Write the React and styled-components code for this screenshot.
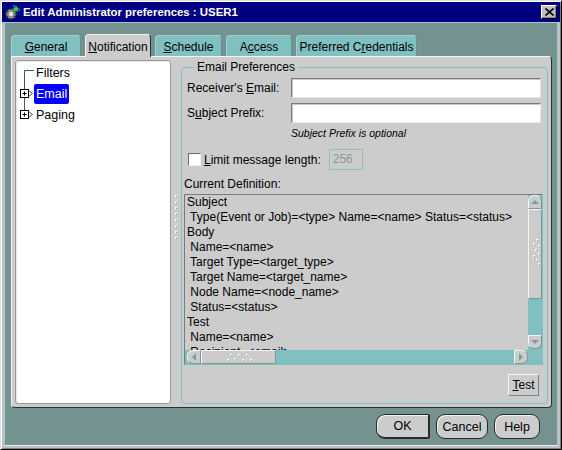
import styled, { createGlobalStyle } from 'styled-components';

const GlobalStyle = createGlobalStyle`
  html, body { margin: 0; padding: 0; background: #c0c0c0; }
  body {
    font-family: "Liberation Sans", Arial, sans-serif;
    font-size: 12px;
    color: #000;
  }
  u { text-decoration-thickness: 1px; text-underline-offset: 1px; }
`;

const Window = styled.div`
  width: 562px;
  height: 450px;
  box-sizing: border-box;
  display: flex;
  flex-direction: column;
  background: #c0c0c0;
  border-top: 1px solid #dfdfdf;
  border-left: 1px solid #dfdfdf;
  border-right: 1px solid #000;
  border-bottom: 1px solid #000;
  box-shadow: inset 1px 1px #fff, inset -1px -1px #808080;
  padding: 1px;
`;

const TitleBar = styled.div`
  height: 20px;
  flex: none;
  display: flex;
  align-items: center;
  background: #000080;
  color: #fff;
  padding: 0 3px 0 2px;
`;

const Title = styled.span`
  flex: 1;
  margin-left: 2px;
  font-weight: bold;
  font-size: 11.4px;
`;

const CloseBtn = styled.div`
  width: 16px;
  height: 14px;
  box-sizing: border-box;
  background: #c0c0c0;
  border-top: 1px solid #fff;
  border-left: 1px solid #fff;
  border-right: 1px solid #000;
  border-bottom: 1px solid #000;
  box-shadow: inset -1px -1px #808080;
  display: flex;
  align-items: center;
  justify-content: center;
`;

const Body = styled.div`
  flex: 1;
  display: flex;
  flex-direction: column;
  margin: 0 2px 2px 2px;
  padding: 12px 5px 0 6px;
  background: #749290;
  border-top: 1px solid #9ccccc;
  border-left: 1px solid #9ccccc;
  border-right: 1px solid #9ccccc;
  border-bottom: 1px solid #e8e8e8;
`;

const Tabs = styled.div`
  display: flex;
  align-items: flex-end;
  gap: 4px;
  height: 21px;
  position: relative;
  z-index: 1;
`;

const Tab = styled.div`
  width: ${p => p.$w}px;
  height: ${p => (p.$active ? 23 : 21)}px;
  box-sizing: border-box;
  margin-bottom: ${p => (p.$active ? -1 : 0)}px;
  display: flex;
  align-items: center;
  justify-content: center;
  padding-top: ${p => (p.$active ? 1 : 2)}px;
  background: ${p => (p.$active ? '#cccccc' : '#80c0c0')};
  border-top: 1px solid ${p => (p.$active ? '#f4f4f4' : '#9fd2d2')};
  border-left: 1px solid ${p => (p.$active ? '#f4f4f4' : '#9fd2d2')};
  border-right: 1px solid ${p => (p.$active ? '#303030' : '#5f9494')};
  border-radius: 4px 4px 0 0;
  white-space: nowrap;
`;

const Panel = styled.div`
  height: 352px;
  box-sizing: border-box;
  flex: none;
  display: flex;
  padding: 3px 3px 3px 3px;
  background: #cccccc;
  border-top: 1px solid #f4f4f4;
  border-left: 1px solid #f4f4f4;
  border-right: 1px solid #303030;
  border-bottom: 1px solid #303030;
  border-radius: 0 4px 4px 4px;
`;

const TreePane = styled.div`
  width: 156px;
  flex: none;
  box-sizing: border-box;
  background: #fff;
  border: 1px solid #9a9a9a;
  border-radius: 3px;
  box-shadow: inset 1px 1px #e6e6e6;
  padding-top: 1px;
`;

const Splitter = styled.div`
  width: 10px;
  flex: none;
  box-sizing: border-box;
  padding: 135px 0 0 4px;
`;

const TreeRow = styled.div`
  height: 21px;
  display: flex;
  align-items: center;
`;

const TreeText = styled.span`
  height: 20px;
  line-height: 20px;
  padding: 0 2px;
  border-radius: 2px;
  background: ${p => (p.$selected ? '#0000ff' : 'transparent')};
  color: ${p => (p.$selected ? '#fff' : '#000')};
  font-size: 12.5px;
`;

const Group = styled.fieldset`
  flex: 1;
  min-width: 0;
  margin: 1px 0 0 0;
  padding: 0 4px 0 2px;
  border: 1px solid #80c0c0;
  border-radius: 4px;
  display: flex;
  flex-direction: column;
`;

const Legend = styled.legend`
  padding: 0 3px;
  margin-left: 10px;
  line-height: 13px;
  font-size: 12px;
`;

const FieldRow = styled.div`
  display: flex;
  align-items: center;
  margin-top: ${p => p.$mt}px;
  margin-right: 2px;
`;

const Label = styled.label`
  width: 104px;
  margin-left: 3px;
  flex: none;
  white-space: nowrap;
`;

const TextInput = styled.div`
  flex: 1;
  height: 20px;
  box-sizing: border-box;
  background: #fff;
  border-top: 1px solid #7a7a7a;
  border-left: 1px solid #7a7a7a;
  border-right: 1px solid #e8e8e8;
  border-bottom: 1px solid #e8e8e8;
  box-shadow: inset 1px 1px #c8c8c8;
`;

const Hint = styled.div`
  margin: 4px 0 0 107px;
  height: 12px;
  line-height: 12px;
  font-size: 10.5px;
  font-style: italic;
`;

const CheckRow = styled.div`
  display: flex;
  align-items: center;
  margin: 10px 0 0 4px;
  height: 21px;
`;

const CheckBox = styled.span`
  width: 13px;
  height: 13px;
  box-sizing: border-box;
  background: #fff;
  border-top: 1px solid #6a6a6a;
  border-left: 1px solid #6a6a6a;
  border-right: 1px solid #f0f0f0;
  border-bottom: 1px solid #f0f0f0;
  margin-right: 3px;
`;

const SmallField = styled.div`
  width: 34px;
  height: 21px;
  box-sizing: border-box;
  margin-left: 8px;
  border: 1px solid #86c4c4;
  background: #cccccc;
  color: #8a9a9a;
  padding-left: 3px;
  line-height: 19px;
`;

const SectionLabel = styled.div`
  margin: 7px 0 0 0;
  height: 14px;
  line-height: 14px;
`;

const Definition = styled.div`
  margin-top: 3px;
  height: 171px;
  box-sizing: border-box;
  display: grid;
  grid-template-columns: 1fr 14px;
  grid-template-rows: 1fr 14px;
  border-top: 1px solid #7a7a7a;
  border-left: 1px solid #7a7a7a;
  border-right: 1px solid #80c0c0;
  border-bottom: 1px solid #80c0c0;
  background: #cccccc;
  overflow: hidden;
`;

const DefText = styled.div`
  overflow: hidden;
  padding: 0 0 0 2px;
  line-height: 15px;
`;

const DefLine = styled.div`
  white-space: pre;
  height: 15px;
`;

const VScroll = styled.div`
  background: #80c0c0;
  display: flex;
  flex-direction: column;
`;

const HScroll = styled.div`
  background: #80c0c0;
  display: flex;
  align-items: center;
  padding-left: 2px;
`;

const ScrollCorner = styled.div`
  background: #80c0c0;
`;

const ScrollBtn = styled.div`
  width: ${p => p.$w || 14}px;
  height: ${p => p.$h || 14}px;
  box-sizing: border-box;
  flex: none;
  background: #cccccc;
  border-top: 1px solid #f4f4f4;
  border-left: 1px solid #f4f4f4;
  border-right: 1px solid #7a9a9a;
  border-bottom: 1px solid #7a9a9a;
  border-radius: ${p => p.$r || '0'};
  display: flex;
  align-items: ${p => p.$align || 'center'};
  justify-content: center;
  padding-top: ${p => p.$pt || 0}px;
`;

const Track = styled.div`
  flex: 1;
`;

const ButtonBar = styled.div`
  display: flex;
  justify-content: flex-end;
  margin: 9px 4px 0 0;
`;

const SmallButton = styled.div`
  width: 31px;
  height: 22px;
  box-sizing: border-box;
  display: flex;
  align-items: center;
  justify-content: center;
  background: #cccccc;
  border-top: 1px solid #f4f4f4;
  border-left: 1px solid #f4f4f4;
  border-right: 1px solid #6a8a8a;
  border-bottom: 1px solid #6a8a8a;
`;

const Footer = styled.div`
  flex: 1;
  display: flex;
  justify-content: flex-end;
  align-items: flex-start;
  gap: 6px;
  padding: 6px 12px 0 0;
`;

const DlgButton = styled.div`
  width: ${p => p.$w}px;
  height: 25px;
  box-sizing: border-box;
  display: flex;
  align-items: center;
  justify-content: center;
  background: #cccccc;
  border: 1px solid #2a2a2a;
  border-right-width: ${p => (p.$default ? 2 : 1)}px;
  border-bottom-width: ${p => (p.$default ? 2 : 1)}px;
  border-radius: ${p => (p.$default ? '9px 2px 2px 9px' : '9px')};
  box-shadow: inset 1px 1px #f4f4f4;
  font-size: 12.5px;
`;

const TitleIcon = () => (
  <svg width="17" height="17" viewBox="0 0 17 17">
    <circle cx="7" cy="10" r="5" fill="#8c8c8c" />
    <circle cx="7" cy="10" r="2.2" fill="#e0e0e0" />
    <path d="M2 6l2 2M12 6l-2 2M2 14l2-2M12 14l-2-2M7 4v2M7 16v-2M1 10h2M13 10h-2" stroke="#303030" strokeWidth="1.4" />
    <path d="M12 1l1 2.5 2.5 .5-2 1.7.6 2.6-2.1-1.4-2.2 1.4.6-2.6-2-1.7 2.6-.5z" fill="#2bd14a" />
    <circle cx="10" cy="2" r="1" fill="#3a6bff" />
    <circle cx="15.5" cy="6" r="1" fill="#3a6bff" />
  </svg>
);

const CloseGlyph = () => (
  <svg width="9" height="8" viewBox="0 0 9 8">
    <path d="M0.5 0.5l8 7M8.5 0.5l-8 7" stroke="#000" strokeWidth="1.6" />
  </svg>
);

const TreeConnector = ({ kind }) => (
  <svg width="18" height="21" viewBox="0 0 18 21" style={{ flex: 'none' }}>
    {kind === 'first' && (
      <path d="M8.5 8.5V21M8.5 8.5H18" stroke="#3d5c5c" fill="none" />
    )}
    {kind !== 'first' && (
      <>
        <path d={kind === 'last' ? 'M8.5 0V6' : 'M8.5 0V6M8.5 15V21'} stroke="#3d5c5c" fill="none" />
        <rect x="4.5" y="6.5" width="8" height="8" fill="#fff" stroke="#000" />
        <path d="M6.5 10.5h4M8.5 8.5v4" stroke="#000" />
        <path d="M12.5 7.5l4 3-4 3" stroke="#3d5c5c" fill="none" />
      </>
    )}
  </svg>
);

const Arrow = ({ dir }) => {
  const d = {
    up: 'M1 5l4-4 4 4z',
    down: 'M1 1l4 4 4-4z',
    left: 'M5 1l-4 4 4 4z',
    right: 'M1 1l4 4-4 4z',
  }[dir];
  const vertical = dir === 'up' || dir === 'down';
  return (
    <svg width={vertical ? 10 : 6} height={vertical ? 6 : 10} viewBox={vertical ? '0 0 10 6' : '0 0 6 10'}>
      <path d={d} fill="#7f9f9f" />
    </svg>
  );
};

const Dots = ({ points, w, h }) => (
  <svg width={w} height={h} viewBox={`0 0 ${w} ${h}`}>
    {points.map(([x, y], i) => (
      <g key={i}>
        <rect x={x} y={y} width="2" height="2" fill="#fff" />
        <rect x={x + 1} y={y + 1} width="1" height="1" fill="#7f9f9f" />
      </g>
    ))}
  </svg>
);

const vGrip = [[5, 1], [2, 5], [7, 7], [4, 11], [7, 15], [2, 17], [5, 21], [7, 25]];
const hGrip = [[5, 1], [13, 1], [21, 1], [2, 6], [9, 5], [17, 6], [25, 6]];
const splitGrip = [[0, 0], [0, 6], [0, 12], [0, 18], [0, 24], [0, 30], [0, 36], [0, 42]];

const tabs = [
  { key: 'g', w: 70, label: <><u>G</u>eneral</> },
  { key: 'n', w: 66, label: <><u>N</u>otification</>, active: true },
  { key: 's', w: 67, label: <><u>S</u>chedule</> },
  { key: 'a', w: 66, label: <>A<u>c</u>cess</> },
  { key: 'p', w: 121, label: <>Preferred C<u>r</u>edentials</> },
];

const definition = [
  'Subject',
  ' Type(Event or Job)=<type> Name=<name> Status=<status>',
  'Body',
  ' Name=<name>',
  ' Target Type=<target_type>',
  ' Target Name=<target_name>',
  ' Node Name=<node_name>',
  ' Status=<status>',
  'Test',
  ' Name=<name>',
  ' Recipient=<email>',
];

export default function App() {
  return (
    <>
      <GlobalStyle />
      <Window>
        <TitleBar>
          <TitleIcon />
          <Title>Edit Administrator preferences : USER1</Title>
          <CloseBtn><CloseGlyph /></CloseBtn>
        </TitleBar>
        <Body>
          <Tabs>
            {tabs.map(t => (
              <Tab key={t.key} $w={t.w} $active={t.active}>{t.label}</Tab>
            ))}
          </Tabs>
          <Panel>
            <TreePane>
              <TreeRow>
                <TreeConnector kind="first" />
                <TreeText>Filters</TreeText>
              </TreeRow>
              <TreeRow>
                <TreeConnector kind="mid" />
                <TreeText $selected>Email</TreeText>
              </TreeRow>
              <TreeRow>
                <TreeConnector kind="last" />
                <TreeText>Paging</TreeText>
              </TreeRow>
            </TreePane>
            <Splitter>
              <Dots points={splitGrip} w={3} h={45} />
            </Splitter>
            <Group>
              <Legend>Email Preferences</Legend>
              <FieldRow $mt={4}>
                <Label>Receiver's <u>E</u>mail:</Label>
                <TextInput />
              </FieldRow>
              <FieldRow $mt={5}>
                <Label>S<u>u</u>bject Prefix:</Label>
                <TextInput />
              </FieldRow>
              <Hint>Subject Prefix is optional</Hint>
              <CheckRow>
                <CheckBox />
                <span><u>L</u>imit message length:</span>
                <SmallField>256</SmallField>
              </CheckRow>
              <SectionLabel>Current Definition:</SectionLabel>
              <Definition>
                <DefText>
                  {definition.map((line, i) => (
                    <DefLine key={i}>{line}</DefLine>
                  ))}
                </DefText>
                <VScroll>
                  <ScrollBtn $r="6px 6px 0 0"><Arrow dir="up" /></ScrollBtn>
                  <ScrollBtn $h={90} $align="flex-start" $pt={28}>
                    <Dots points={vGrip} w={9} h={28} />
                  </ScrollBtn>
                  <Track />
                  <ScrollBtn $r="0 0 6px 6px"><Arrow dir="down" /></ScrollBtn>
                  <div style={{ height: 1 }} />
                </VScroll>
                <HScroll>
                  <ScrollBtn $r="6px 0 0 6px"><Arrow dir="left" /></ScrollBtn>
                  <ScrollBtn $w={75}><Dots points={hGrip} w={28} h={8} /></ScrollBtn>
                  <Track />
                  <ScrollBtn $r="0 6px 6px 0"><Arrow dir="right" /></ScrollBtn>
                </HScroll>
                <ScrollCorner />
              </Definition>
              <ButtonBar>
                <SmallButton><span><u>T</u>est</span></SmallButton>
              </ButtonBar>
            </Group>
          </Panel>
          <Footer>
            <DlgButton $w={54} $default>OK</DlgButton>
            <DlgButton $w={52}>Cancel</DlgButton>
            <DlgButton $w={46}>Help</DlgButton>
          </Footer>
        </Body>
      </Window>
    </>
  );
}
